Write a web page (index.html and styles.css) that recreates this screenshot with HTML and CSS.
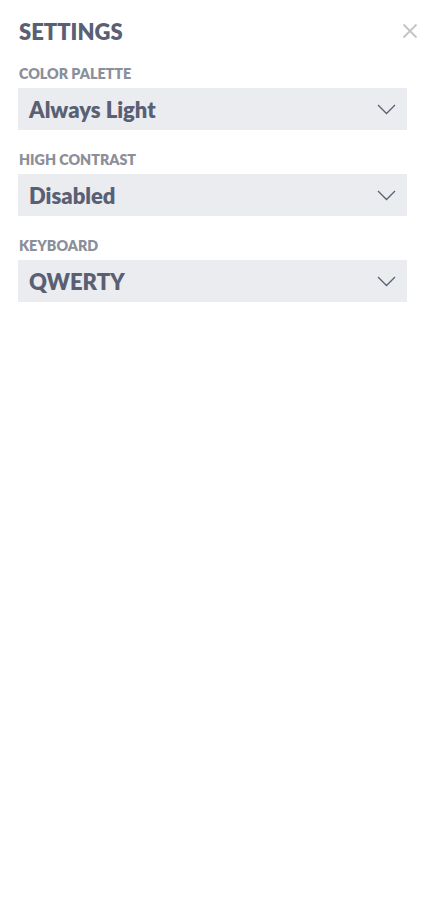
FILE: index.html
```html
<!DOCTYPE html>
<html lang="en">
<head>
    <meta charset="UTF-8">
    <meta name="viewport" content="width=device-width, initial-scale=1.0">
    <title>Settings</title>
    <link rel="stylesheet" href="styles.css">
</head>
<body>
    <div id="settings-panel">
        <div class="panel-header">
            <h1 class="panel-title">SETTINGS</h1>
            <button class="close-btn" aria-label="Close">
                <svg width="16" height="16" viewBox="0 0 16 16">
                    <path d="M1.5 1.5 L14.5 14.5 M14.5 1.5 L1.5 14.5" stroke="currentColor" stroke-width="1.8" fill="none"/>
                </svg>
            </button>
        </div>

        <div class="setting">
            <label class="setting-label">COLOR PALETTE</label>
            <div class="select-box">
                <span class="select-value">Always Light</span>
                <svg class="chevron" width="19" height="11" viewBox="0 0 19 11">
                    <path d="M1 1 L9.5 9.5 L18 1" stroke="currentColor" stroke-width="1.3" fill="none"/>
                </svg>
            </div>
        </div>

        <div class="setting">
            <label class="setting-label">HIGH CONTRAST</label>
            <div class="select-box">
                <span class="select-value">Disabled</span>
                <svg class="chevron" width="19" height="11" viewBox="0 0 19 11">
                    <path d="M1 1 L9.5 9.5 L18 1" stroke="currentColor" stroke-width="1.3" fill="none"/>
                </svg>
            </div>
        </div>

        <div class="setting">
            <label class="setting-label">KEYBOARD</label>
            <div class="select-box">
                <span class="select-value">QWERTY</span>
                <svg class="chevron" width="19" height="11" viewBox="0 0 19 11">
                    <path d="M1 1 L9.5 9.5 L18 1" stroke="currentColor" stroke-width="1.3" fill="none"/>
                </svg>
            </div>
        </div>
    </div>
</body>
</html>
```

FILE: styles.css
```css
:root {
    --text-color: #596073;
    --label-color: #8b8f9a;
    --field-bg: #ebecf0;
    --close-color: #c4c4c4;
}

* {
    box-sizing: border-box;
    margin: 0;
    padding: 0;
}

body {
    font-family: "Source Sans Pro", Lato, "Liberation Sans", sans-serif;
    background: #ffffff;
    color: var(--text-color);
}

#settings-panel {
    padding: 15px 33px 0 18px;
}

/* 标题栏 */
.panel-header {
    display: flex;
    justify-content: space-between;
    align-items: center;
    height: 32px;
}

.panel-title {
    font-size: 22px;
    font-weight: 800;
    padding-left: 1px;
}

.close-btn {
    border: none;
    background: none;
    color: var(--close-color);
    display: flex;
    margin-right: -11px;
    cursor: pointer;
}

/* 设置项 */
.setting {
    margin-top: 17px;
}

.setting + .setting {
    margin-top: 20px;
}

.setting-label {
    display: block;
    font-size: 14.3px;
    font-weight: 800;
    color: var(--label-color);
    height: 24px;
    line-height: 19px;
    padding-left: 1px;
}

.select-box {
    display: flex;
    align-items: center;
    justify-content: space-between;
    height: 42px;
    background: var(--field-bg);
    padding: 0 11px 0 11px;
}

.select-value {
    font-size: 22px;
    font-weight: 800;
}

.chevron {
    color: var(--text-color);
}
```
